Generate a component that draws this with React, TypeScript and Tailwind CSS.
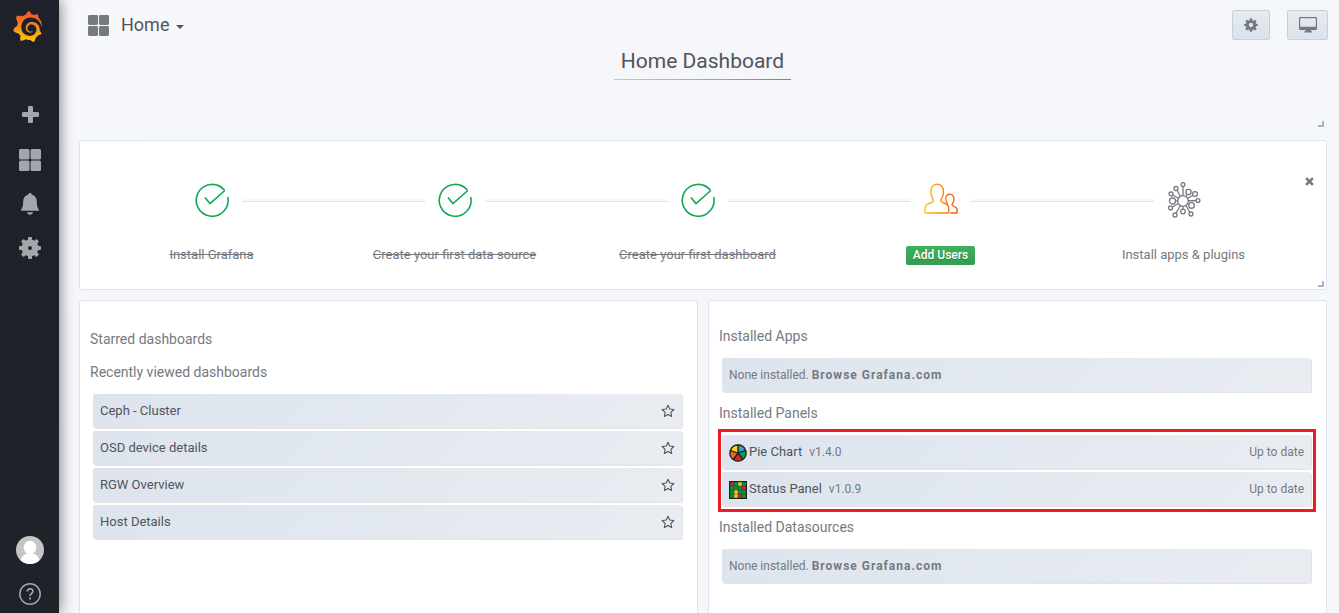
import React from 'react';
import { SiGrafana } from 'react-icons/si';

function Cog({ className }: { className: string }) {
  return (
    <svg viewBox="0 0 24 24" className={className} aria-hidden="true">
      <path
        fillRule="evenodd"
        fill="currentColor"
        d="M10.3 0.6h3.4l.8 3.1 2 .8 2.700-1.700 2.500 2.500-1.700 2.700.8 2 3.100.6v2.800l-3.100.8-.8 2 1.700 2.700-2.500 2.500-2.700-1.700-2 .8-.8 3.100h-3.400l-.8-3.100-2-.8-2.700 1.700-2.500-2.500 1.700-2.700-.8-2-3.100-.8v-2.800l3.100-.6.8-2-1.700-2.700 2.500-2.500 2.700 1.700 2-.8zM12 8.300a3.700 3.700 0 1 0 0 7.400 3.700 3.700 0 0 0 0-7.400z"
      />
    </svg>
  );
}

function SideCog() {
  return (
    <svg viewBox="0 0 22 22" className="size-[22px]" aria-hidden="true">
      <g fill="currentColor">
        {[0, 45, 90, 135, 180, 225, 270, 315].map((a) => (
          <rect key={a} x="9" y="0" width="4" height="6" rx="1" transform={`rotate(${a} 11 11)`} />
        ))}
      </g>
      <circle cx="11" cy="11" r="5.200" fill="none" stroke="currentColor" strokeWidth="6.500" />
    </svg>
  );
}

function Squares({ className }: { className: string }) {
  return (
    <svg viewBox="0 0 22 22" className={className} fill="currentColor" aria-hidden="true">
      <rect x="0" y="0" width="10.500" height="10.500" rx="1.500" />
      <rect x="11.500" y="0" width="10.500" height="10.500" rx="1.500" />
      <rect x="0" y="11.500" width="10.500" height="10.500" rx="1.500" />
      <rect x="11.500" y="11.500" width="10.500" height="10.500" rx="1.500" />
    </svg>
  );
}

function Sidebar() {
  const item = 'flex h-11 w-full items-center justify-center pl-px';
  return (
    <nav className="relative z-10 flex w-[59px] shrink-0 flex-col bg-[#1f2129] bg-linear-to-b from-[#1e2129] to-[#1f2229] text-[#a5a6aa] shadow-[0_0_14px_#00000090]">
      <a href="#home" aria-label="Grafana" className="flex h-[52px] items-center justify-center pr-1">
        <svg width="0" height="0" className="absolute" aria-hidden="true">
          <defs>
            <linearGradient id="logoFill" x1="0" y1="0" x2="0" y2="1">
              <stop offset="0.100" stopColor="#f05a28" />
              <stop offset="1" stopColor="#fbca0a" />
            </linearGradient>
          </defs>
        </svg>
        <SiGrafana className="size-[31px]" style={{ fill: 'url(#logoFill)' }} />
      </a>
      <div className="mt-[42px] flex flex-col">
        <a href="#create" aria-label="Create" className={`${item} pb-[3px]`}>
          <svg viewBox="0 0 17 17" className="size-[17px]" fill="currentColor" aria-hidden="true">
            <rect x="6" y="0" width="5" height="17" rx="1.200" />
            <rect x="0" y="6" width="17" height="5" rx="1.200" />
          </svg>
        </a>
        <a href="#dashboards" aria-label="Dashboards" className={item}>
          <Squares className="size-[22px]" />
        </a>
        <a href="#alerting" aria-label="Alerting" className={item}>
          <svg viewBox="0 0 18 22" className="h-[22px] w-[18px]" fill="currentColor" aria-hidden="true">
            <path d="M9 0c.9 0 1.600.6 1.700 1.400C14 2.200 15.800 5 15.800 8.200c0 4.200.6 6.300 2 8.200.4.700.2 1.300-.6 1.300H.8c-.8 0-1-.6-.6-1.300 1.400-1.900 2-4 2-8.200 0-3.200 1.800-6 5.100-6.800C7.400.6 8.100 0 9 0zM6 19.200h6c-.2 1.500-1.500 2.500-3 2.500s-2.800-1-3-2.500z" />
          </svg>
        </a>
        <a href="#configuration" aria-label="Configuration" className={item}>
          <SideCog />
        </a>
      </div>
      <div className="-mb-[3px] mt-auto flex flex-col">
        <a href="#profile" aria-label="Profile" className={item}>
          <svg viewBox="0 0 28 28" className="size-7" aria-hidden="true">
            <clipPath id="avatarClip"><circle cx="14" cy="14" r="14" /></clipPath>
            <g clipPath="url(#avatarClip)">
              <rect width="28" height="28" fill="#c5c5c5" />
              <ellipse cx="14" cy="11.500" rx="6.300" ry="6.800" fill="#fff" />
              <path d="M4 28c0-6 3-9.500 7-10.500h6c4 1 7 4.500 7 10.500z" fill="#fff" />
            </g>
          </svg>
        </a>
        <a href="#help" aria-label="Help" className={item}>
          <svg viewBox="0 0 22 22" className="size-[22px]" fill="none" stroke="currentColor" aria-hidden="true">
            <circle cx="11" cy="11" r="10.200" strokeWidth="1.500" />
            <path d="M8.300 8.600c0-3.600 5.600-3.600 5.600-.3 0 2.200-2.800 2.200-2.800 4.700" strokeWidth="1.600" />
            <path d="M11.100 14.600v1.900" strokeWidth="1.800" />
          </svg>
        </a>
      </div>
    </nav>
  );
}

function CheckIcon() {
  return (
    <svg viewBox="0 0 34 34" className="size-[34px]" fill="none" stroke="#10a855" strokeWidth="1.600" aria-hidden="true">
      <path d="M29.500 7.300A15.900 15.900 0 1 0 32.700 14" />
      <path d="M10 14.500l5 6L29.800 7.500" />
    </svg>
  );
}

function UsersIcon() {
  return (
    <svg viewBox="0 0 34 34" className="size-[34px]" fill="none" stroke="url(#usersStroke)" strokeWidth="1.400" strokeLinejoin="round" aria-hidden="true">
      <defs>
        <linearGradient id="usersStroke" gradientUnits="userSpaceOnUse" x1="0" y1="0" x2="34" y2="0">
          <stop offset="0" stopColor="#fdc90c" />
          <stop offset="1" stopColor="#f4511e" />
        </linearGradient>
      </defs>
      <path d="M2 30h21.500c.9 0 1.400-.6 1.300-1.500l-.3-5c-.2-1.600-2.300-2.600-4.600-3.500-2.200-.9-3.200-1.300-3.200-2.300 0-1.300 1.300-2 1.700-3.900.1-.8 1.100-1.400.9-3.400C20 4.400 17.500 1.300 13.100 1.300S6.400 4.400 7 10.400c0 1.800.7 2.600.9 3.400.5 2 1.600 2.600 1.600 3.900 0 1-1 1.400-3.200 2.300-2.300.9-4.800 2-5 3.600L.8 28.500c-.1.900.300 1.500 1.200 1.500z" />
      <path d="M26 30h6.100c.800 0 1.100-.4 1.100-1.200l-.3-3c-.2-1.300-1.600-1.900-3-2.500-1.200-.5-1.900-.8-1.900-1.500 0-.9 1-1.300 1.200-2.800.8-.5.800-1.400.7-2.500.1-3.200-1.300-5.200-3.900-5.200s-4.200 1.700-4.200 4.500c0 1.600.1 2.500.8 3 .3 1.300.900 1.900.9 2.700" />
    </svg>
  );
}

function PluginsIcon() {
  const nodes = [
    [16, 2.500, 1.900], [9, 6.500, 2], [21.500, 10, 2.600], [28, 12, 2.400], [4, 12, 2], [5.500, 19, 3],
    [31, 18.500, 1.900], [24.500, 23.500, 2.800], [3.500, 26, 2], [8, 33, 2], [16, 29.500, 2.300], [24, 32, 2],
  ];
  return (
    <svg viewBox="0 0 34 36" className="h-9 w-[34px]" fill="white" stroke="#767980" strokeWidth="1.300" aria-hidden="true">
      {nodes.map(([x, y], i) => <path key={i} d={`M16 19L${x} ${y}`} />)}
      {nodes.map(([x, y, r], i) => <circle key={i} cx={x} cy={y} r={r} />)}
      <circle cx="16" cy="19" r="5.300" />
    </svg>
  );
}

function PieIcon() {
  const colors = ['#2fa4d8', '#0c9d4d', '#e02020', '#f26a21', '#f4d80c'];
  const pt = (deg: number) => {
    const a = ((deg - 90) * Math.PI) / 180;
    return `${9 + 8 * Math.cos(a)} ${9 + 8 * Math.sin(a)}`;
  };
  return (
    <svg viewBox="0 0 18 18" className="mt-px size-[18px]" stroke="#23262b" strokeWidth="1.300" aria-hidden="true">
      {colors.map((c, i) => (
        <path key={c} fill={c} d={`M9 9L${pt(i * 72)}A8 8 0 0 1 ${pt(i * 72 + 72)}Z`} />
      ))}
    </svg>
  );
}

function StatusIcon() {
  const rows = ['rgyg', 'gggr', 'gygg', 'gyrg'];
  const fills: Record<string, string> = { g: '#0b9444', r: '#d8232a', y: '#f6c915' };
  return (
    <svg viewBox="0 0 18 18" className="mt-px size-[18px]" aria-hidden="true">
      <rect width="18" height="18" fill="#17251c" />
      {rows.map((row, y) =>
        row.split('').map((c, x) => (
          <rect key={`${x}-${y}`} x={1.2 + x * 4} y={1.2 + y * 4} width="3.600" height="3.600" fill={fills[c]} />
        )),
      )}
    </svg>
  );
}

function ResizeCorner() {
  return <span className="absolute right-[2px] bottom-[2px] size-[6px] border-r-2 border-b-2 border-[#a9b2bf]" />;
}

const panel = 'relative rounded-[3px] border border-[#dde4ed] bg-white';
const rowStyle =
  'flex h-[34px] items-center rounded-[2px] bg-linear-135 from-[#dde4ed] to-[#e9edf2] px-[7px] shadow-[1px_1px_0_#e3e3e3]';
const heading = 'text-sm leading-[21px] text-[#767980]';
const navButton =
  'flex h-[30px] items-center justify-center rounded-[2px] border border-[#c7d0d9] bg-linear-to-b from-[#e7ebf0] to-[#dae2ec]';

const steps = [
  { title: 'Install Grafana', state: 'done' },
  { title: 'Create your first data source', state: 'done' },
  { title: 'Create your first dashboard', state: 'done' },
  { title: 'Add Users', state: 'cta' },
  { title: 'Install apps & plugins', state: 'todo' },
];

function GettingStarted() {
  return (
    <section className={`${panel} h-[150px] pt-10`}>
      <button type="button" aria-label="Close" className="absolute top-9 right-3 flex size-[9px] items-center justify-center text-[#767980]">
        <svg viewBox="0 0 8 8" className="size-full" stroke="currentColor" strokeWidth="2.400" aria-hidden="true">
          <path d="M1 1l6 6M7 1l-6 6" />
        </svg>
      </button>
      <ol className="flex pr-[21px] pl-[10px]">
        {steps.map((s, i) => (
          <li key={s.title} className="relative flex flex-1 flex-col items-center">
            {i > 0 && <span className="absolute top-[18px] right-[calc(50%+30px)] left-[calc(-50%+30px)] h-[3px] border-b border-[#dde4ed] bg-[#f7f8fa]" />}
            <div className="flex h-[38px] items-center">
              {s.state === 'done' && <CheckIcon />}
              {s.state === 'cta' && <UsersIcon />}
              {s.state === 'todo' && <PluginsIcon />}
            </div>
            {s.state === 'cta' ? (
              <a href="#users" className="mt-[27px] rounded-[2px] bg-linear-to-b from-[#3eb15b] to-[#369b50] px-[7px] text-xs leading-[19px] font-medium text-white [text-shadow:0_1px_1px_#0003]">
                {s.title}
              </a>
            ) : (
              <a href="#step" className={`mt-[26px] text-[13px] leading-5 text-[#767980] ${s.state === 'done' ? 'line-through' : ''}`}>
                {s.title}
              </a>
            )}
          </li>
        ))}
      </ol>
      <ResizeCorner />
    </section>
  );
}

function StarButton({ name }: { name: string }) {
  return (
    <button type="button" aria-label={`Star ${name}`} className="ml-auto text-[#52545c]">
      <svg viewBox="0 0 14 14" className="size-[14px]" fill="none" stroke="currentColor" strokeWidth="1.100" strokeLinejoin="round" aria-hidden="true">
        <path d="M7 1.200l1.750 3.800 4.100.5-3 2.800.8 4.200L7 10.400l-3.650 2.100.8-4.200-3-2.800 4.100-.5z" />
      </svg>
    </button>
  );
}

function EmptyRow() {
  return (
    <div className={`${rowStyle} text-xs text-[#767980]`}>
      <span>
        None installed.{' '}
        <a href="#browse" className="font-bold tracking-[1px]">Browse Grafana.com</a>
      </span>
    </div>
  );
}

function PluginRow({ icon, name, version }: { icon: React.ReactNode; name: string; version: string }) {
  return (
    <a href="#plugin" className={rowStyle}>
      {icon}
      <span className="ml-[2px] text-[13px] text-[#52545c]">{name}</span>
      <span className="ml-[7px] text-xs text-[#767980]">{version}</span>
      <span className="ml-auto text-xs text-[#767980]">Up to date</span>
    </a>
  );
}

export default function App() {
  return (
    <div className="flex min-h-screen overflow-hidden bg-[#f5f7fa] font-[Roboto,sans-serif] text-[#52545c]">
      <Sidebar />
      <main className="flex min-w-0 flex-1 flex-col bg-linear-135 from-[#f7f8fa] via-[#f4f6fa] to-[#f7f8fa] pr-3 pl-5">
        <header className="flex h-[50px] items-center pl-[9px] text-[#52545c]">
          <Squares className="size-[21px] text-[#767980]" />
          <button type="button" className="ml-3 flex items-center text-lg leading-6">
            Home
            <span className="mt-1 ml-[7px] border-x-[4px] border-t-[4px] border-x-transparent border-t-[#52545c]" />
          </button>
          <div className="-mr-px ml-auto flex gap-[17px] text-[#767980]">
            <button type="button" aria-label="Settings" className={`${navButton} w-[38px]`}>
              <Cog className="size-[14px]" />
            </button>
            <button type="button" aria-label="Cycle view mode" className={`${navButton} w-[41px]`}>
              <svg viewBox="0 0 18 16" className="h-4 w-[18px]" fill="currentColor" aria-hidden="true">
                <path fillRule="evenodd" d="M1.500 0h15A1.300 1.300 0 0 1 18 1.400v10.200a1.300 1.300 0 0 1-1.500 1.400H12v1l1 .6V15.500H5.500v-.9L6.500 14v-1h-5A1.300 1.300 0 0 1 0 11.600V1.400A1.300 1.300 0 0 1 1.500 0zM1.200 1.200v8.600h15.600V1.200z" />
              </svg>
            </button>
          </div>
        </header>

        <section className="relative flex h-20 justify-center border-r border-b border-transparent">
          <div className="flex h-[30px] flex-col">
            <h1 className="px-[7px] text-[21px] leading-[22px] font-normal">Home Dashboard</h1>
            <span className="mt-[7px] h-px w-full shrink-0 bg-linear-to-r from-[#fdd00c] to-[#f05a28]" />
          </div>
          <ResizeCorner />
        </section>

        <div className="mt-[10px]">
          <GettingStarted />
        </div>

        <div className="mt-[10px] grid flex-1 grid-cols-2 gap-[10px]">
          <section className={`${panel} rounded-b-none border-b-0 px-[10px] pt-7`}>
            <h2 className={heading}>Starred dashboards</h2>
            <h2 className={`${heading} mt-3`}>Recently viewed dashboards</h2>
            <ul className="mt-[11px] mr-[5px] ml-[3px] flex flex-col gap-[3px]">
              {['Ceph - Cluster', 'OSD device details', 'RGW Overview', 'Host Details'].map((name) => (
                <li key={name} className={`${rowStyle} text-[13px]`}>
                  <a href="#dashboard">{name}</a>
                  <StarButton name={name} />
                </li>
              ))}
            </ul>
          </section>

          <section className={`${panel} rounded-b-none border-b-0 px-[10px] pt-[25px]`}>
            <h2 className={heading}>Installed Apps</h2>
            <div className="mt-[11px] mr-[5px] ml-[3px]">
              <EmptyRow />
            </div>
            <h2 className={`${heading} mt-[11px]`}>Installed Panels</h2>
            <div className="mt-[5px] -ml-px flex flex-col gap-[3px] border-[3px] border-[#ed1c24] py-[3px] pr-[2px] pl-px">
              <PluginRow icon={<PieIcon />} name="Pie Chart" version="v1.4.0" />
              <PluginRow icon={<StatusIcon />} name="Status Panel" version="v1.0.9" />
            </div>
            <h2 className={`${heading} mt-[5px]`}>Installed Datasources</h2>
            <div className="mt-[11px] mr-[5px] ml-[3px]">
              <EmptyRow />
            </div>
          </section>
        </div>
      </main>
    </div>
  );
}
